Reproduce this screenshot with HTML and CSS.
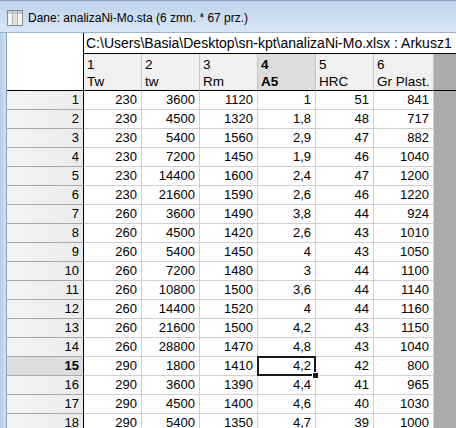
FILE: index.html
```html
<!DOCTYPE html>
<html>
<head>
<meta charset="utf-8">
<link rel="stylesheet" href="styles.css">
</head>
<body>
<div class="window">
  <div class="titlebar">
    <svg class="ticon" width="16" height="16" viewBox="0 0 16 16">
      <rect x="0.5" y="0.5" width="15" height="15" fill="#f4f4f4" stroke="#8a8a8a"/>
      <rect x="1" y="1" width="14" height="3" fill="#c9c9c9"/>
      <line x1="5.5" y1="1" x2="5.5" y2="15" stroke="#b0b0b0"/>
      <line x1="10.5" y1="1" x2="10.5" y2="15" stroke="#b0b0b0"/>
      <rect x="6" y="4" width="4" height="11" fill="#e2e2e2"/>
    </svg>
    <span class="ttext">Dane: analizaNi-Mo.sta (6 zmn. * 67 prz.)</span>
  </div>
  <div class="frame">
    <div class="lborder"></div>
    <div class="sheet" id="sheet">
      <div class="corner"></div>
      <div class="path">C:\Users\Basia\Desktop\sn-kpt\analizaNi-Mo.xlsx : Arkusz1</div>
      <div class="ch">1<br>Tw</div>
      <div class="ch">2<br>tw</div>
      <div class="ch">3<br>Rm</div>
      <div class="ch sel">4<br>A5</div>
      <div class="ch">5<br>HRC</div>
      <div class="ch">6<br>Gr Plast.</div>
      <div class="gray hdr"></div>
    </div>
  </div>
</div>
<script src="script.js"></script>
</body>
</html>
```
FILE: script.js
```js
var data = [
[230,3600,1120,"1",51,841],
[230,4500,1320,"1,8",48,717],
[230,5400,1560,"2,9",47,882],
[230,7200,1450,"1,9",46,1040],
[230,14400,1600,"2,4",47,1200],
[230,21600,1590,"2,6",46,1220],
[260,3600,1490,"3,8",44,924],
[260,4500,1420,"2,6",43,1010],
[260,5400,1450,"4",43,1050],
[260,7200,1480,"3",44,1100],
[260,10800,1500,"3,6",44,1140],
[260,14400,1520,"4",44,1160],
[260,21600,1500,"4,2",43,1150],
[260,28800,1470,"4,8",43,1040],
[290,1800,1410,"4,2",42,800],
[290,3600,1390,"4,4",41,965],
[290,4500,1400,"4,6",40,1030],
[290,5400,1350,"4,7",39,1000]
];
var sheet = document.getElementById('sheet');
data.forEach(function(r, i){
  var h = document.createElement('div');
  h.className = 'rh' + (i === 14 ? ' sel' : '');
  h.textContent = i + 1;
  sheet.appendChild(h);
  r.forEach(function(v, j){
    var c = document.createElement('div');
    c.className = 'cell' + (i === 14 && j === 3 ? ' active' : '');
    c.textContent = v;
    sheet.appendChild(c);
  });
  var g = document.createElement('div');
  g.className = 'gray';
  sheet.appendChild(g);
});
```
FILE: styles.css
```css
html, body {
  margin: 0;
  padding: 0;
}
body {
  width: 456px;
  height: 428px;
  overflow: hidden;
  background: #fff;
  font-family: "Liberation Sans", Arial, sans-serif;
}
.window {
  display: flex;
  flex-direction: column;
  height: 428px;
}
.titlebar {
  height: 32px;
  box-sizing: border-box;
  border-top: 1px solid #8c9db2;
  background: linear-gradient(#bcd1ea, #cfe0f3 60%, #d6e5f5);
  display: flex;
  align-items: center;
  padding-left: 7px;
  padding-top: 2px;
  flex: none;
}
.ticon {
  margin-right: 5px;
}
.ttext {
  font-family: "Liberation Sans", Arial, sans-serif;
  font-size: 12px;
  color: #000;
}
.frame {
  flex: 1;
  display: flex;
  border-top: 1px solid #9fb3c8;
  overflow: hidden;
}
.lborder {
  width: 6px;
  flex: none;
  background: linear-gradient(90deg, #b7cde6, #cfe0f2);
  border-right: 1px solid #8fa6bf;
}
.sheet {
  flex: 1;
  display: grid;
  grid-template-columns: 77px 58px 58px 58px 58px 58px 60px 1fr;
  grid-template-rows: 21px 37px;
  grid-auto-rows: 19px;
  font-size: 13px;
  color: #000;
}
.sheet > div {
  box-sizing: border-box;
  white-space: nowrap;
  overflow: hidden;
}
.corner {
  grid-row: 1 / 3;
  grid-column: 1;
  background: #fff;
  border-right: 1px solid #000;
  border-bottom: 1px solid #000;
}
.path {
  grid-column: 2 / 9;
  background: #fff;
  border-bottom: 1px solid #000;
  padding-left: 2px;
  line-height: 20px;
  font-size: 14px;
}
.ch {
  background: #f0f0f0;
  border-right: 1px solid #c4c4c4;
  border-bottom: 1px solid #000;
  padding: 2px 0 0 3px;
  line-height: 17px;
  font-size: 13.5px;
}
.ch.sel {
  background: #dcdcdc;
  font-weight: bold;
}
.gray {
  background: #ababab;
}
.gray.hdr {
  border-bottom: 1px solid #000;
}
.rh {
  background: linear-gradient(90deg, #f3f3f3, #ececec);
  border-right: 1px solid #000;
  border-bottom: 1px solid #a8a8a8;
  text-align: right;
  padding-right: 4px;
  line-height: 18px;
}
.rh.sel {
  background: #dcdcdc;
  font-weight: bold;
}
.cell {
  background: #fff;
  border-right: 1px solid #d0d0d0;
  border-bottom: 1px solid #d0d0d0;
  text-align: right;
  padding-right: 4px;
  line-height: 18px;
}
.cell.active {
  position: relative;
  overflow: visible !important;
}
.cell.active::after {
  content: "";
  position: absolute;
  left: -1px;
  top: -1px;
  right: -1px;
  bottom: -1px;
  border: 2px solid #1a1a1a;
  pointer-events: none;
}
.cell.active::before {
  content: "";
  position: absolute;
  right: -4px;
  bottom: -4px;
  width: 5px;
  height: 5px;
  background: #1a1a1a;
  border: 1px solid #fff;
  z-index: 2;
}
```
